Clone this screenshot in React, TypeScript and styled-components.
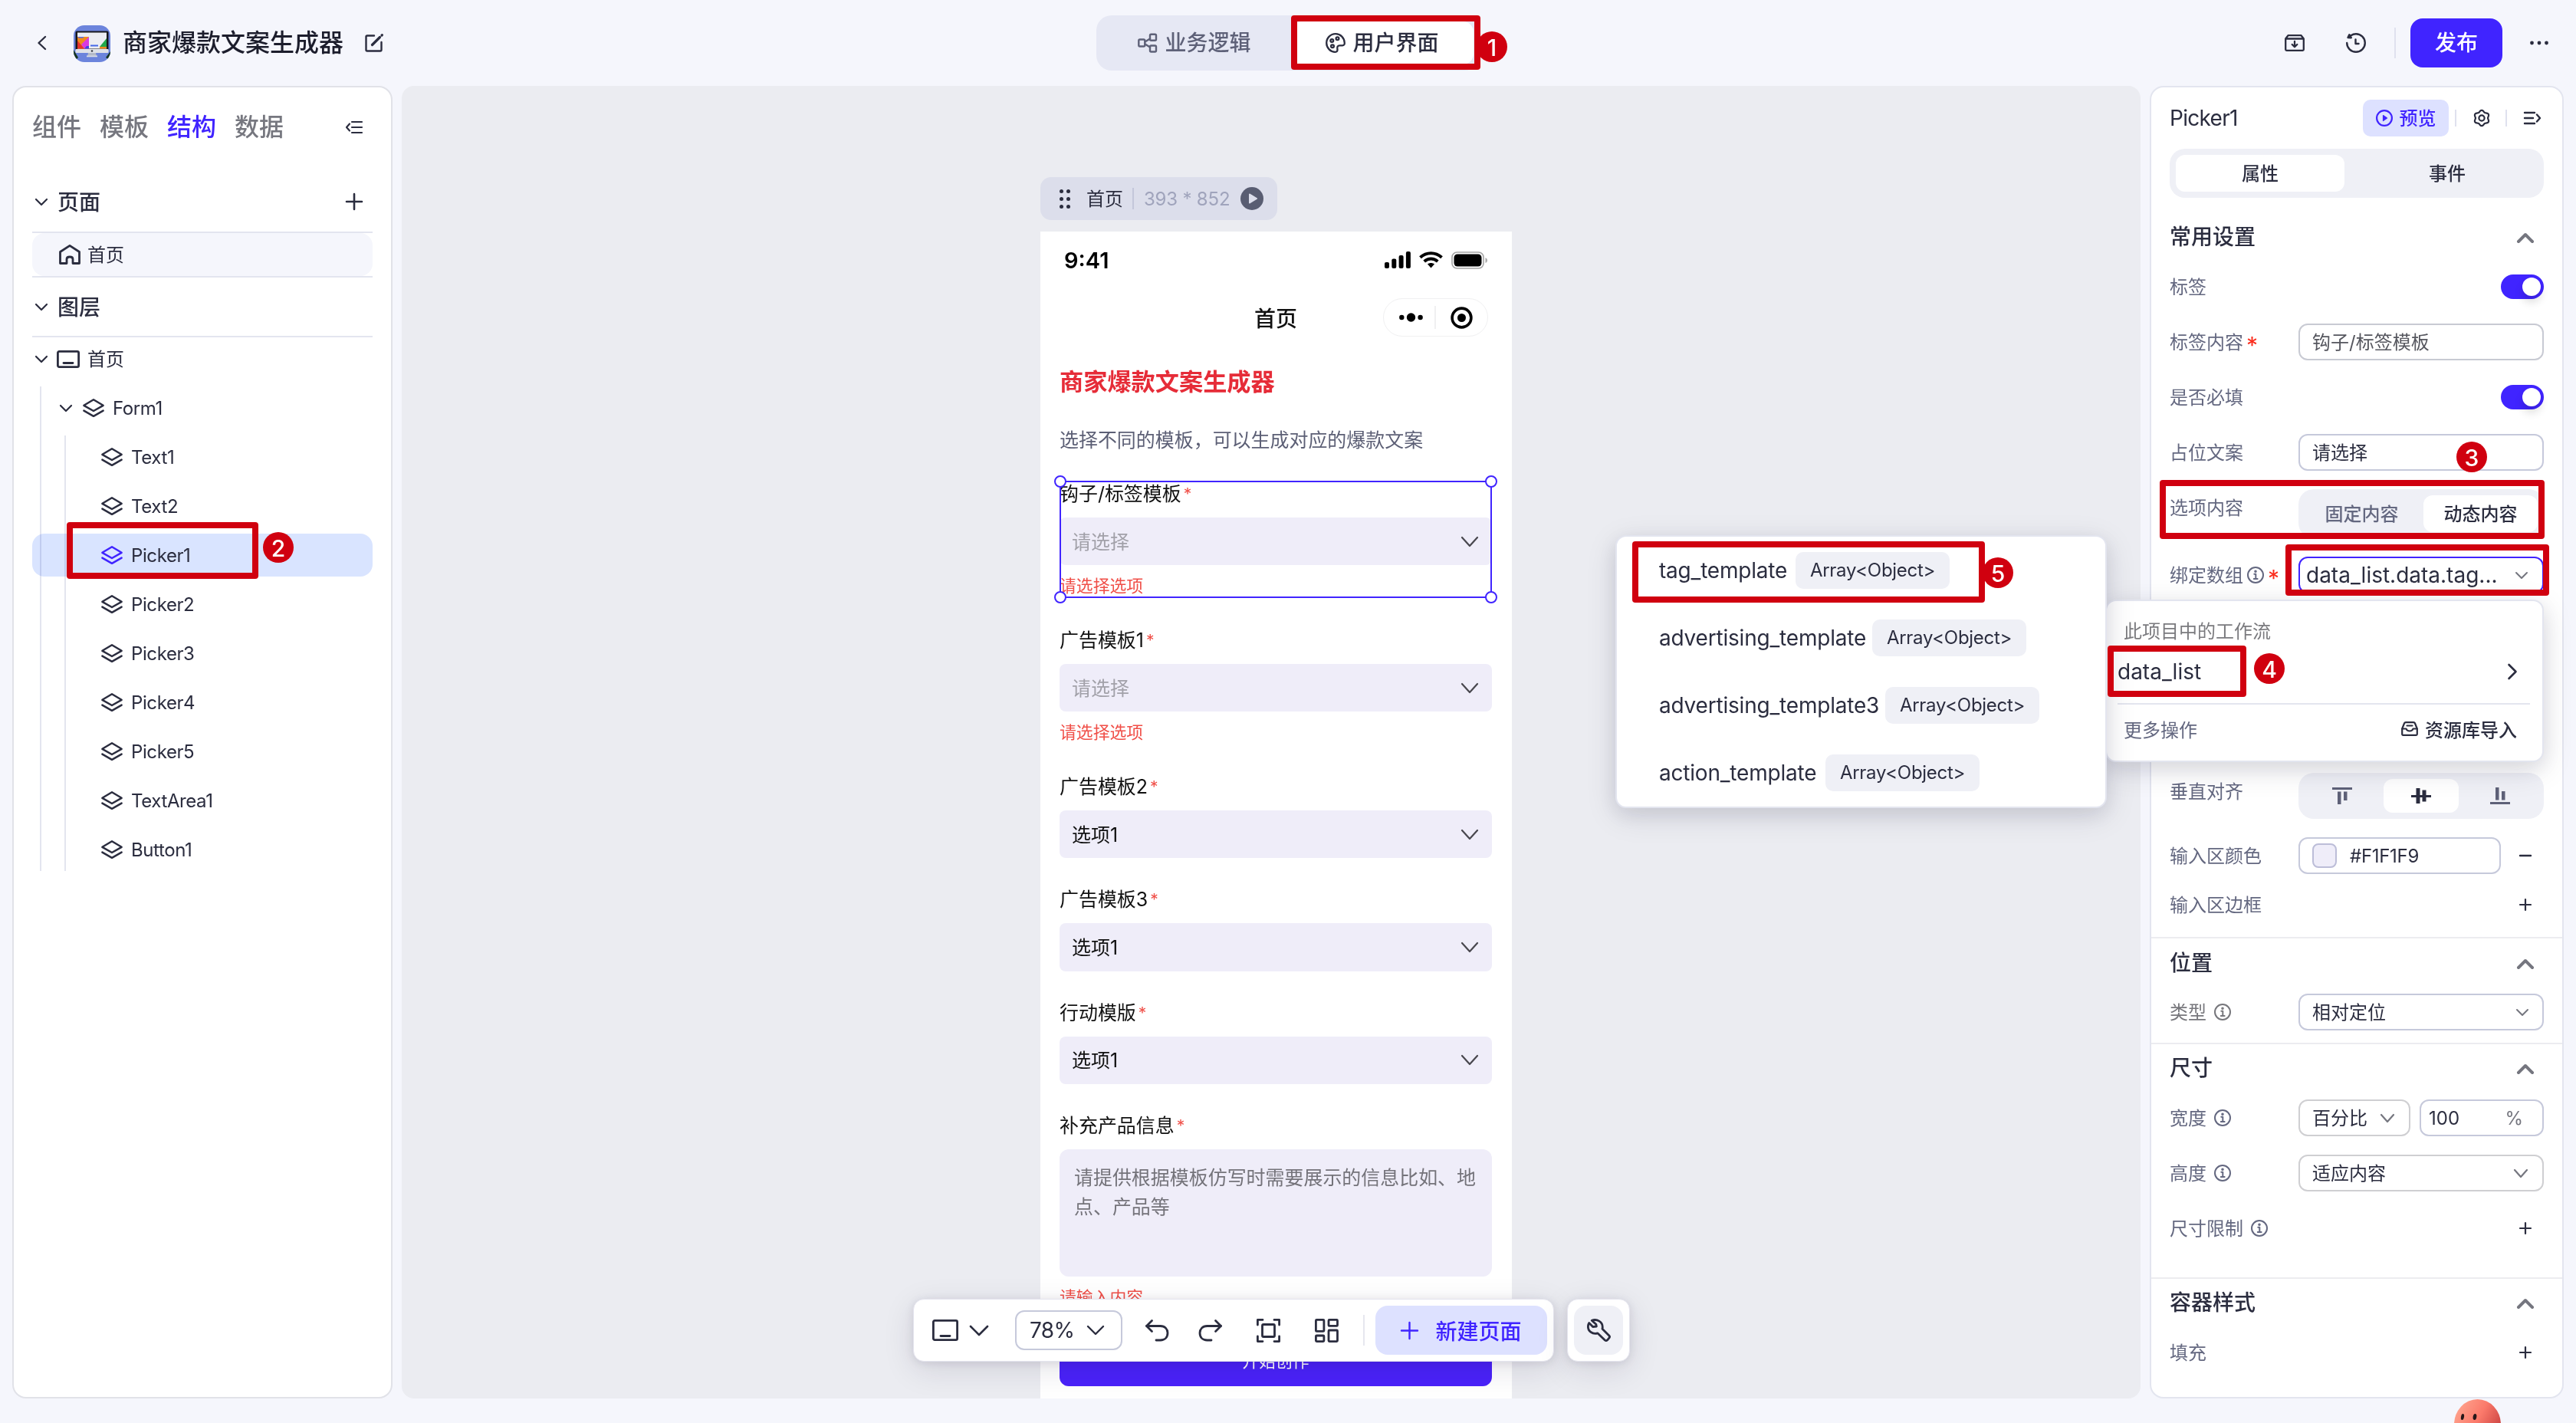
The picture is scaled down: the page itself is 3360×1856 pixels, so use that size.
import React, { ReactNode } from 'react';
import styled, { createGlobalStyle, css } from 'styled-components';

const COLORS = {
  primary: '#4024ff',
  primarySoft: '#dde1ff',
  ink: '#2b2d3f',
  label: '#646880',
  gray: '#75767f',
  page: '#f5f6fc',
  canvas: '#ebecf1',
  fill: '#eff0f6',
  field: '#efedf9',
  border: '#e3e5ef',
  inputBorder: '#c6c9db',
  error: '#f04f48',
  mark: '#d0000f',
};

const GlobalStyle = createGlobalStyle`
  * {
    box-sizing: border-box;
  }

  body {
    margin: 0;
    background: ${COLORS.page};
    color: ${COLORS.ink};
    font-family: Inter, 'Noto Sans CJK SC', sans-serif;
    font-size: 24px;
  }

  svg {
    display: block;
    flex-shrink: 0;
    overflow: visible;
  }
`;

// Chinese glyphs sit low on the Inter baseline, this lifts them back to the middle
const Cjk = styled.span`
  padding-bottom: 3px;
`;

/* ---------- icons ---------- */

interface IconProps {
  w: number;
  h: number;
  stroke?: number;
  color?: string;
  children?: ReactNode;
}

function Icon({ w, h, stroke = 2.6, color = COLORS.ink, children }: IconProps) {
  return (
    <svg
      width={w}
      height={h}
      viewBox={`0 0 ${w} ${h}`}
      fill="none"
      stroke={color}
      strokeWidth={stroke}
      strokeLinecap="round"
      strokeLinejoin="round"
    >
      {children}
    </svg>
  );
}

const ChevronDown = ({ w = 16, h = 9, stroke = 2.2, color = COLORS.ink }: Partial<IconProps>) => (
  <Icon w={w} h={h} stroke={stroke} color={color}>
    <path d={`M1 1 L${w / 2} ${h - 1} L${w - 1} 1`} />
  </Icon>
);

const ChevronUp = () => (
  <Icon w={22} h={13} stroke={4} color={COLORS.gray}>
    <path d="M2 11 L11 2 L20 11" />
  </Icon>
);

const PlusIcon = ({ w = 22, stroke = 2.6, color = COLORS.ink }: Partial<IconProps>) => (
  <Icon w={w} h={w} stroke={stroke} color={color}>
    <path d={`M${w / 2} 1 V${w - 1} M1 ${w / 2} H${w - 1}`} />
  </Icon>
);

const LayersIcon = ({ color }: { color?: string }) => (
  <Icon w={28} h={24} stroke={2.5} color={color}>
    <path d="M14 1.3 L26.6 8.8 L14 16 L1.4 8.8 Z" />
    <path d="M1.4 15.6 L14 22.8 L26.6 15.6" />
  </Icon>
);

const InfoIcon = ({ color = COLORS.label }: { color?: string }) => (
  <Icon w={22} h={22} stroke={2} color={color}>
    <circle cx="11" cy="11" r="10" />
    <path d="M9.3 9.8 H11.3 V16 M8.8 16 H13.6" />
    <circle cx="11" cy="6.3" r="0.8" fill={color} />
  </Icon>
);

const ScreenIcon = ({ w = 30, h = 23 }: { w?: number; h?: number }) => (
  <Icon w={w} h={h} stroke={2.8}>
    <rect x="1.4" y="1.4" width={w - 2.8} height={h - 2.8} rx="1.8" />
    <path d={`M${w / 2 - 6} ${h - 6.5} H${w / 2 + 6}`} />
  </Icon>
);

// six soft teeth around the hub
const gearPoints = Array.from({ length: 72 }, (_, i) => {
  const angle = (i * Math.PI) / 36;
  const radius = 9.1 + 1.05 * Math.cos(6 * angle);
  return `${(11 + radius * Math.sin(angle)).toFixed(2)},${(11 - radius * Math.cos(angle)).toFixed(2)}`;
}).join(' ');

/* ---------- header ---------- */

const Page = styled.div`
  position: relative;
  display: flex;
  flex-direction: column;
  width: 3360px;
  height: 1856px;
  overflow: hidden;
  background: ${COLORS.page};
`;

const Header = styled.header`
  display: grid;
  grid-template-columns: 1fr 500px 1fr;
  height: 112px;
`;

const HeaderLeft = styled.div`
  display: flex;
  align-items: center;
  padding-left: 49px;
`;

const AppLogo = styled.div`
  margin: 2px 16px 0 36px;
`;

const AppTitle = styled.h1`
  margin: 0 28px 0 0;
  font-size: 32px;
  font-weight: 500;
  line-height: 48px;
  color: #1c1d2c;
`;

const ModeSwitch = styled.div`
  display: flex;
  justify-content: space-between;
  align-self: center;
  height: 72px;
  padding: 8px;
  border-radius: 20px;
  background: #e6e8f4;
`;

const Mode = styled.div<{ active?: boolean }>`
  display: flex;
  justify-content: center;
  align-items: center;
  gap: 9px;
  width: ${({ active }) => (active ? 238 : 240)}px;
  border-radius: 14px;
  font-size: 28px;
  font-weight: 500;
  line-height: 40px;
  color: ${({ active }) => (active ? COLORS.ink : '#5e6178')};
  background: ${({ active }) => (active ? '#ffffff' : 'none')};
`;

const HeaderRight = styled.div`
  display: flex;
  justify-content: flex-end;
  align-items: center;
  padding-right: 36px;
`;

const HeaderIcon = styled.div<{ space: number }>`
  margin-right: ${({ space }) => space}px;
`;

const VLine = styled.div<{ size: number; left?: number; right?: number; tone?: string }>`
  flex-shrink: 0;
  width: 2px;
  height: ${({ size }) => size}px;
  margin-left: ${({ left }) => left || 0}px;
  margin-right: ${({ right }) => right || 0}px;
  background: ${({ tone }) => tone || '#dfe1ee'};
`;

const PublishButton = styled.div`
  width: 120px;
  height: 64px;
  margin-right: 36px;
  border-radius: 16px;
  background: ${COLORS.primary};
  color: #ffffff;
  font-size: 28px;
  font-weight: 500;
  line-height: 64px;
  text-align: center;
`;

/* ---------- left panel ---------- */

const Body = styled.main`
  display: grid;
  grid-template-columns: 496px 2268px 540px;
  gap: 12px;
  height: 1712px;
  padding-left: 16px;
`;

const Panel = styled.section`
  min-width: 0;
  border: 2px solid ${COLORS.border};
  border-radius: 18px;
  background: #ffffff;
  overflow: hidden;
`;

const LeftPanel = styled(Panel)`
  padding: 0 24px;
  border-color: #e1e2e8;
`;

const Tabs = styled.div`
  display: flex;
  align-items: center;
  gap: 24px;
  height: 104px;
  padding-right: 13px;
`;

const Tab = styled.div<{ active?: boolean }>`
  font-size: 32px;
  font-weight: 500;
  line-height: 48px;
  color: ${({ active }) => (active ? COLORS.primary : '#76777f')};
`;

const Push = styled.div`
  margin-left: auto;
`;

const TreeHead = styled.div<{ tall: number; top?: number }>`
  display: flex;
  align-items: center;
  gap: 13px;
  height: ${({ tall }) => tall}px;
  padding: ${({ top }) => top || 0}px 13px 0 4px;
  border-bottom: 2px solid ${COLORS.border};
  font-size: 28px;
  font-weight: 500;
`;

const PageRow = styled.div`
  display: flex;
  align-items: center;
  gap: 9px;
  height: 56px;
  padding-left: 35px;
  border-radius: 16px;
  background: ${COLORS.page};
`;

const PageRows = styled.div`
  border-bottom: 2px solid ${COLORS.border};
`;

const RootRow = styled.div`
  display: flex;
  align-items: center;
  height: 64px;
  padding: 0 0 8px 4px;
  gap: 12px;

  & > svg + svg {
    margin-right: -2px;
  }
`;

const Tree = styled.div`
  display: flex;
  flex-direction: column;
  height: 632px;
  background: linear-gradient(${COLORS.border}, ${COLORS.border}) 10px 0 / 2px 632px no-repeat,
    linear-gradient(${COLORS.border}, ${COLORS.border}) 42px 64px / 2px 568px no-repeat;
`;

const TreeRow = styled.div<{ level: number; active?: boolean }>`
  display: flex;
  flex-shrink: 0;
  align-items: center;
  gap: 11px;
  height: 56px;
  margin-bottom: 8px;
  padding-left: ${({ level }) => (level === 1 ? 36 : 90)}px;
  border-radius: 16px;
  letter-spacing: -0.4px;
  ${({ active }) =>
    active &&
    css`
      background: #d9e4ff;
      mix-blend-mode: multiply;
    `}

  & > svg:nth-last-child(2) {
    margin-left: ${({ level }) => (level === 1 ? 3 : 0)}px;
  }
`;

/* ---------- canvas ---------- */

const Canvas = styled.section`
  display: flex;
  flex-direction: column;
  align-items: flex-start;
  padding: 119px 0 0 833px;
  border-radius: 16px;
  background: ${COLORS.canvas};
  overflow: hidden;
`;

const FrameChip = styled.div`
  display: flex;
  align-items: center;
  width: 309px;
  height: 56px;
  margin-bottom: 15px;
  padding-left: 25px;
  border-radius: 14px;
  background: #dcdeeb;
`;

const FrameName = styled(Cjk)`
  margin-left: 21px;
`;

const FrameSize = styled.span`
  width: 114px;
  margin-right: 12px;
  color: #a0a4bc;
  white-space: nowrap;
  letter-spacing: -0.2px;
`;

const Phone = styled.div`
  display: flex;
  flex-direction: column;
  width: 615px;
  height: 1522px;
  padding: 0 26px 0 25px;
  background: #ffffff;
`;

const StatusBar = styled.div`
  display: flex;
  align-items: center;
  height: 74px;
  padding: 0 6px;
  font-size: 29px;
  font-weight: 600;
  color: #000000;
`;

const StatusIcons = styled.div`
  display: flex;
  align-items: center;
  gap: 11px;
  margin-left: auto;
`;

const NavBar = styled.div`
  display: grid;
  grid-template-columns: 1fr auto 1fr;
  align-items: center;
  height: 76px;
  font-size: 28px;
  font-weight: 500;
  color: #111111;
`;

const Capsule = styled.div`
  display: flex;
  align-items: center;
  justify-self: end;
  width: 137px;
  height: 50px;
  margin-right: 5px;
  padding-left: 20px;
  border: 1px solid #f0f0f1;
  border-radius: 25px;
`;

const PromoTitle = styled.div`
  margin-top: 22px;
  font-size: 31.2px;
  font-weight: 700;
  line-height: 48px;
  color: #e62c38;
`;

const PromoText = styled.div`
  margin: 32px 0 34px;
  font-size: 24.96px;
  line-height: 40px;
  color: #5c5f75;
`;

const Field = styled.div`
  position: relative;
  display: flex;
  flex-direction: column;
  margin-bottom: 38px;
  color: #111111;
`;

const FieldLabel = styled.div`
  display: flex;
  height: 32px;
  margin-bottom: 15px;
  font-size: 24.96px;
  line-height: 32px;

  & > i {
    margin-left: 3px;
    font-size: 21px;
    font-style: normal;
    line-height: 34px;
    color: ${COLORS.error};
  }
`;

const FieldSelect = styled.div<{ empty?: boolean }>`
  display: flex;
  justify-content: space-between;
  align-items: center;
  width: 564px;
  height: 62.4px;
  padding: 0 18px 0 16px;
  border-radius: 8px;
  background: ${COLORS.field};
  font-size: 24.96px;
  color: ${({ empty }) => (empty ? '#a2a1a9' : '#111111')};
`;

const FieldError = styled.div`
  height: 43.6px;
  padding-top: 13px;
  font-size: 21.84px;
  line-height: 29px;
  color: ${COLORS.error};
`;

const FieldTextArea = styled.div`
  width: 564px;
  height: 166px;
  padding: 19px 0 0 19px;
  border-radius: 12px;
  background: ${COLORS.field};
  font-size: 24.96px;
  line-height: 37.44px;
  color: #74737a;
`;

const StartButton = styled.div`
  width: 564px;
  height: 62px;
  margin-top: -1px;
  border-radius: 12px;
  background: #4a22fa;
  color: #ffffff;
  font-size: 21.84px;
  line-height: 59px;
  text-align: center;
`;

const Selection = styled.div`
  position: absolute;
  inset: -1px 0 0 0;
  width: 564px;
  height: 153px;
  border: 2px solid ${COLORS.primary};
`;

const Handle = styled.i<{ x: 'left' | 'right'; y: 'top' | 'bottom' }>`
  position: absolute;
  ${({ x }) => x}: -9px;
  ${({ y }) => y}: -9px;
  width: 16px;
  height: 16px;
  border: 2px solid ${COLORS.primary};
  border-radius: 50%;
  background: #ffffff;
`;

/* ---------- floating toolbar ---------- */

const FloatBar = styled.div`
  position: absolute;
  left: 1191px;
  top: 1694px;
  display: flex;
  gap: 17px;
`;

const FloatGroup = styled.div`
  display: flex;
  align-items: center;
  height: 82px;
  padding: 0 8px;
  border: 1px solid #e4e4ee;
  border-radius: 14px;
  background: #ffffff;
  box-shadow: 0 10px 40px rgba(30, 24, 60, 0.12), 0 2px 12px rgba(30, 24, 60, 0.1);
`;

const ScreenPicker = styled.div`
  display: flex;
  align-items: center;
  gap: 15px;
  margin: 0 35px 0 16px;
`;

const ZoomSelect = styled.div`
  display: flex;
  align-items: center;
  justify-content: space-between;
  width: 140px;
  height: 52px;
  margin-right: 30px;
  padding: 0 22px 0 17px;
  border: 2px solid ${COLORS.inputBorder};
  border-radius: 12px;
  font-size: 28px;
  letter-spacing: -0.6px;
`;

const BarTools = styled.div`
  display: flex;
  align-items: center;
  gap: 45px;
  width: 254px;

  & > svg:first-child {
    margin-right: -7px;
  }
`;

const NewPageButton = styled.div`
  display: flex;
  justify-content: center;
  align-items: center;
  gap: 22px;
  width: 224px;
  height: 64px;
  border-radius: 16px;
  background: ${COLORS.primarySoft};
  color: ${COLORS.primary};
  font-size: 28px;
  font-weight: 500;
`;

const WrenchButton = styled.div`
  display: flex;
  justify-content: center;
  align-items: center;
  width: 64px;
  height: 64px;
  border-radius: 16px;
  background: ${COLORS.fill};
`;

/* ---------- right panel ---------- */

const PanelTop = styled.div`
  display: flex;
  align-items: center;
  height: 48px;
  margin: 16px 28px 16px 24px;
  font-size: 28px;
  letter-spacing: -0.7px;
`;

const PreviewButton = styled.div`
  display: flex;
  justify-content: center;
  align-items: center;
  gap: 9px;
  width: 112px;
  height: 48px;
  margin-left: auto;
  border-radius: 10px;
  background: ${COLORS.primarySoft};
  color: ${COLORS.primary};
  font-size: 24px;
  font-weight: 500;
  letter-spacing: 0;
`;

const Segment = styled.div<{ tall: number; wide: number }>`
  display: flex;
  justify-content: space-between;
  flex-shrink: 0;
  width: ${({ wide }) => wide}px;
  height: ${({ tall }) => tall}px;
  padding: 8px;
  border-radius: 20px;
  background: ${COLORS.fill};
`;

const SegmentItem = styled.div<{ wide: number; active?: boolean; muted?: boolean }>`
  display: flex;
  justify-content: center;
  align-items: center;
  width: ${({ wide }) => wide}px;
  border-radius: 12px;
  font-weight: 500;
  color: ${({ muted }) => (muted ? COLORS.label : COLORS.ink)};
  background: ${({ active }) => (active ? '#ffffff' : 'none')};
`;

const Indent = styled.div`
  margin-left: 24px;
`;

const Row = styled.div<{ top: number; tall?: number }>`
  display: flex;
  align-items: flex-start;
  height: ${({ tall }) => tall || 48}px;
  margin: ${({ top }) => top}px 24px 0 24px;
`;

const RowLabel = styled.div<{ gap?: number; gray?: boolean }>`
  display: flex;
  align-items: center;
  gap: ${({ gap }) => gap || 10}px;
  width: 168px;
  height: 48px;
  color: ${({ gray }) => (gray ? '#77777c' : COLORS.label)};
  white-space: nowrap;

  & > i {
    margin-top: 8px;
    font-family: Inter, sans-serif;
    font-size: 30px;
    font-style: normal;
    line-height: 30px;
    color: #fb2c1c;
  }
`;

const RowEnd = styled.div<{ inset?: number }>`
  display: flex;
  align-items: center;
  height: 48px;
  margin-left: auto;
  margin-right: ${({ inset }) => inset || 0}px;
`;

const GroupTitle = styled.div`
  font-size: 28px;
  font-weight: 500;
  line-height: 47px;
`;

const Divider = styled.div<{ top: number }>`
  height: 2px;
  margin-top: ${({ top }) => top}px;
  background: #ececf0;
`;

const Toggle = styled.div`
  display: flex;
  justify-content: flex-end;
  width: 56px;
  height: 32px;
  padding: 4px;
  border-radius: 16px;
  background: ${COLORS.primary};

  &::after {
    content: '';
    width: 24px;
    height: 24px;
    border-radius: 50%;
    background: #ffffff;
    box-shadow: 0 8px 12px rgba(0, 0, 0, 0.14);
  }
`;

const Input = styled.div<{ wide?: number; tone?: string; text?: string; big?: boolean; right?: number }>`
  display: flex;
  align-items: center;
  justify-content: space-between;
  flex-shrink: 0;
  width: ${({ wide }) => wide || 320}px;
  height: 48px;
  padding: 0 ${({ right }) => right || 18}px 0 ${({ big }) => (big ? 8 : 16)}px;
  border: 2px solid ${({ tone }) => tone || COLORS.inputBorder};
  border-radius: 12px;
  color: ${({ text }) => text || COLORS.ink};
  font-size: ${({ big }) => (big ? 28 : 24)}px;
`;

const Swatch = styled.div`
  width: 32px;
  height: 32px;
  margin-right: 17px;
  border: 2px solid #bcbdd8;
  border-radius: 8px;
  background: ${COLORS.field};
`;

const ColorValue = styled.span`
  flex: 1;
  letter-spacing: -0.3px;
`;

const PercentValue = styled.span`
  margin-left: -6px;
`;

const PercentUnit = styled.span`
  color: ${COLORS.gray};
`;

/* ---------- dropdown menus ---------- */

const menuBox = css`
  position: absolute;
  border: 2px solid ${COLORS.border};
  border-radius: 14px;
  background: #ffffff;
  box-shadow: 0 10px 40px rgba(20, 20, 60, 0.12), 0 8px 24px rgba(20, 20, 40, 0.08);
`;

const FlowMenu = styled.div`
  ${menuBox}
  left: 2746px;
  top: 782px;
  width: 572px;
  height: 212px;
  padding: 15px 16px 0 14px;
`;

const FlowCaption = styled.div`
  padding-left: 8px;
  line-height: 50px;
  color: #7a7a7e;
`;

const FlowItem = styled.div`
  display: flex;
  justify-content: space-between;
  align-items: center;
  height: 70px;
  padding: 0 17px 14px 0;
  border-bottom: 2px solid ${COLORS.border};
  font-size: 28px;
`;

const FlowFooter = styled.div`
  display: flex;
  justify-content: space-between;
  align-items: center;
  height: 62px;
  padding: 0 17px 0 8px;
  color: ${COLORS.label};
`;

const FlowImport = styled.div`
  display: flex;
  align-items: center;
  gap: 9px;
  font-weight: 500;
  color: ${COLORS.ink};
`;

const FieldMenu = styled.div`
  ${menuBox}
  left: 2107px;
  top: 698px;
  width: 641px;
  height: 356px;
`;

const FieldOption = styled.div`
  display: flex;
  align-items: center;
  gap: 9px;
  height: 88px;
  padding-left: 55px;
  font-size: 28px;
`;

const OptionName = styled.span<{ wide: number }>`
  width: ${({ wide }) => wide}px;
  letter-spacing: -0.2px;
  white-space: nowrap;
`;

const TypeTag = styled.span`
  width: 201px;
  height: 48px;
  border-radius: 10px;
  background: ${COLORS.fill};
  font-size: 24px;
  letter-spacing: -0.3px;
  line-height: 48px;
  text-align: center;
`;

/* ---------- annotations ---------- */

const MarkBox = styled.div<{ x: number; y: number; w: number; h: number }>`
  position: absolute;
  left: ${({ x }) => x}px;
  top: ${({ y }) => y}px;
  width: ${({ w }) => w}px;
  height: ${({ h }) => h}px;
  border: 8px solid ${COLORS.mark};
  border-radius: 4px;
`;

const MarkDot = styled.div<{ x: number; y: number }>`
  position: absolute;
  left: ${({ x }) => x - 20}px;
  top: ${({ y }) => y - 20}px;
  width: 40px;
  height: 40px;
  border-radius: 50%;
  background: ${COLORS.mark};
  color: #ffffff;
  font-size: 30px;
  font-weight: 500;
  line-height: 42px;
  text-align: center;
`;

const Mascot = styled.div`
  position: absolute;
  left: 3201px;
  top: 1825px;
`;

const treeItems = [
  'Text1',
  'Text2',
  'Picker1',
  'Picker2',
  'Picker3',
  'Picker4',
  'Picker5',
  'TextArea1',
  'Button1',
];

const formFields = [
  { label: '钩子/标签模板', error: '请选择选项', selected: true },
  { label: '广告模板1', error: '请选择选项' },
  { label: '广告模板2', value: '选项1' },
  { label: '广告模板3', value: '选项1' },
  { label: '行动模版', value: '选项1' },
];

const arrayOptions = [
  { name: 'tag_template', width: 169 },
  { name: 'advertising_template', width: 269 },
  { name: 'advertising_template3', width: 286 },
  { name: 'action_template', width: 208 },
];

const marks = [
  { x: 1684, y: 20, w: 247, h: 71 },
  { x: 87, y: 681, w: 250, h: 74 },
  { x: 2817, y: 626, w: 502, h: 77 },
  { x: 2981, y: 710, w: 344, h: 67 },
  { x: 2749, y: 842, w: 181, h: 67 },
  { x: 2129, y: 706, w: 460, h: 80 },
];

const dots = [
  { x: 1946, y: 61 },
  { x: 363, y: 714 },
  { x: 3224, y: 596 },
  { x: 2960, y: 872 },
  { x: 2606, y: 747 },
];

function TopBar() {
  return (
    <Header>
      <HeaderLeft>
        <Icon w={11} h={18} stroke={2.4}>
          <path d="M10 1 L1.5 9 L10 17" />
        </Icon>
        <AppLogo>
          <svg width="48" height="48" viewBox="0 0 48 48">
            <defs>
              <clipPath id="logo-clip">
                <rect width="48" height="48" rx="14" />
              </clipPath>
            </defs>
            <g clipPath="url(#logo-clip)">
              <rect width="48" height="48" fill="#6c84dc" />
              <path d="M0 32 L6 42 L0 48 Z M48 34 L42 42 L48 46 Z" fill="#16351f" />
              <rect x="2.5" y="7.5" width="43" height="25" rx="1.5" fill="#17181c" />
              <rect x="5" y="9.5" width="38" height="21" fill="#eceef2" />
              <rect x="5" y="15" width="15" height="15.5" fill="#f08a1c" />
              <path d="M5 30.5 V20 L14 30.5 Z" fill="#e5322b" />
              <path d="M10 25 L20 15 V30.5 H14 Z" fill="#d93be0" />
              <path d="M14 30.5 L17 27 H20 V30.5 Z" fill="#3a44e8" />
              <path d="M34 28 L43 17 V28 Z" fill="#23a84a" />
              <path d="M34 28 H43 V30.5 H34 Z" fill="#f08a1c" />
              <rect x="22" y="25.5" width="10" height="2" fill="#4469e8" />
              <rect x="6" y="15" width="7" height="1.5" fill="#5a6be0" />
              <rect x="2.5" y="31" width="43" height="5" rx="1" fill="#dfe2e8" />
              <circle cx="24" cy="33.5" r="1.3" fill="#3a3c44" />
              <path d="M19 36 H29 L30 41 H18 Z" fill="#b4bac8" />
              <rect x="17" y="39.5" width="14" height="1.8" fill="#d8dce6" />
            </g>
          </svg>
        </AppLogo>
        <AppTitle>商家爆款文案生成器</AppTitle>
        <Icon w={24} h={24} stroke={2.4}>
          <path d="M12 2.5 H3 Q1.5 2.5 1.5 4 V21 Q1.5 22.5 3 22.5 H20 Q21.5 22.5 21.5 21 V11" />
          <path d="M9.5 14.5 L19.5 4.5" stroke-width={3.2} />
          <path d="M22 2 L22.4 1.6" strokeWidth={3.2} />
        </Icon>
      </HeaderLeft>
      <ModeSwitch>
        <Mode>
          <Icon w={26} h={26} stroke={2.4} color="#5e6178">
            <rect x="1.3" y="8.5" width="8" height="9" rx="1.5" />
            <rect x="16" y="1.8" width="8" height="8" rx="1.5" />
            <rect x="16" y="16.5" width="8" height="8" rx="1.5" />
            <path d="M9.5 11.5 L16 7.5 M9.5 14.5 L16 18.5" />
          </Icon>
          业务逻辑
        </Mode>
        <Mode active>
          <Icon w={26} h={26} stroke={2.3}>
            <path d="M13 1.2 C6.5 1.2 1.2 6.5 1.2 13 C1.2 19.5 6.5 24.8 12.5 24.8 C15 24.8 15.8 23.3 15.4 21.3 C15 18 15.6 16.3 18.4 16.3 H22 C24 16.3 24.9 15 24.8 13 C24.6 6.3 19.5 1.2 13 1.2 Z" />
            <circle cx="8.3" cy="10" r="1.9" />
            <circle cx="15.5" cy="7.3" r="1.9" />
            <circle cx="9" cy="17.3" r="1.9" />
          </Icon>
          用户界面
        </Mode>
      </ModeSwitch>
      <HeaderRight>
        <HeaderIcon space={54}>
          <Icon w={26} h={22} stroke={2.3}>
            <path d="M1.2 5.5 L4.5 1.2 H21.5 L24.8 5.5 V19.5 Q24.8 20.8 23.5 20.8 H2.5 Q1.2 20.8 1.2 19.5 Z M1.2 5.5 H24.8" />
            <path d="M13 9 V16 M9.7 13 L13 16.3 L16.3 13" />
          </Icon>
        </HeaderIcon>
        <HeaderIcon space={37}>
          <Icon w={26} h={26} stroke={2.4}>
            <path d="M6.5 3.3 C8.3 2 10.5 1.2 13 1.2 C19.5 1.2 24.8 6.5 24.8 13 C24.8 19.5 19.5 24.8 13 24.8 C6.5 24.8 1.2 19.5 1.2 13" />
            <path d="M4.3 2.2 L2.5 6 L6.8 6.2 Z" fill={COLORS.ink} />
            <path d="M12.5 8.5 V14 H16.5" />
          </Icon>
        </HeaderIcon>
        <VLine size={40} right={19} />
        <PublishButton>发布</PublishButton>
        <Icon w={24} h={6} stroke={0}>
          <circle cx="2.5" cy="3" r="2.4" fill={COLORS.ink} />
          <circle cx="12" cy="3" r="2.4" fill={COLORS.ink} />
          <circle cx="21.5" cy="3" r="2.4" fill={COLORS.ink} />
        </Icon>
      </HeaderRight>
    </Header>
  );
}

function StructurePanel() {
  return (
    <LeftPanel>
      <Tabs>
        <Tab>组件</Tab>
        <Tab>模板</Tab>
        <Tab active>结构</Tab>
        <Tab>数据</Tab>
        <Push>
          <Icon w={22} h={16} stroke={2.2}>
            <path d="M8 1 H21 M8 8 H21 M8 15 H21 M5 3.5 L1 8 L5 12.5" />
          </Icon>
        </Push>
      </Tabs>
      <TreeHead tall={86} top={6}>
        <ChevronDown />
        <Cjk>页面</Cjk>
        <Push>
          <PlusIcon />
        </Push>
      </TreeHead>
      <PageRows>
        <PageRow>
          <Icon w={28} h={26} stroke={2.8}>
            <path d="M1.5 9.5 L14 1.4 L26.5 9.5 V24.5 H18 V19 Q18 16 14 16 Q10 16 10 19 V24.5 H1.5 Z" />
          </Icon>
          <Cjk>首页</Cjk>
        </PageRow>
      </PageRows>
      <TreeHead tall={78}>
        <ChevronDown />
        <Cjk>图层</Cjk>
      </TreeHead>
      <RootRow>
        <ChevronDown />
        <ScreenIcon />
        <Cjk>首页</Cjk>
      </RootRow>
      <Tree>
        <TreeRow level={1}>
          <ChevronDown />
          <LayersIcon />
          <span>Form1</span>
        </TreeRow>
        {treeItems.map((item) => (
          <TreeRow key={item} level={2} active={item === 'Picker1'}>
            <LayersIcon color={item === 'Picker1' ? COLORS.primary : COLORS.ink} />
            <span>{item}</span>
          </TreeRow>
        ))}
      </Tree>
    </LeftPanel>
  );
}

function PhonePreview() {
  return (
    <Phone>
      <StatusBar>
        9:41
        <StatusIcons>
          <svg width="34" height="22" viewBox="0 0 34 22">
            <rect x="0" y="14" width="6" height="8" rx="2" />
            <rect x="9.3" y="9.5" width="6" height="12.5" rx="2" />
            <rect x="18.6" y="5" width="6" height="17" rx="2" />
            <rect x="27.9" y="0" width="6" height="22" rx="2" />
          </svg>
          <svg width="31" height="22" viewBox="0 0 31 22">
            <g fill="none" stroke="#000000" strokeWidth="4">
              <path d="M1.5 7.8 C9.5 0.3 21.5 0.3 29.5 7.8" />
              <path d="M6.7 13 C12 8.3 19 8.3 24.3 13" />
            </g>
            <path d="M11 16.5 C13.5 14.5 17.5 14.5 20 16.5 L15.5 21.5 Z" />
          </svg>
          <svg width="47" height="23" viewBox="0 0 47 23">
            <rect x="1" y="1" width="41" height="21" rx="6.5" fill="none" stroke="#a5a5a5" strokeWidth="1.6" />
            <rect x="3.5" y="3.5" width="36" height="16" rx="4.5" />
            <path d="M44.5 8 Q47 9 47 11.5 Q47 14 44.5 15 Z" fill="#a5a5a5" />
          </svg>
        </StatusIcons>
      </StatusBar>
      <NavBar>
        <div />
        首页
        <Capsule>
          <svg width="31" height="12" viewBox="0 0 31 12">
            <circle cx="3.3" cy="6" r="3.2" />
            <circle cx="15.5" cy="6" r="5.7" />
            <circle cx="27.6" cy="6" r="3.2" />
          </svg>
          <VLine size={30} left={15} right={19} tone="#f0f0f1" />
          <svg width="29" height="29" viewBox="0 0 29 29">
            <circle cx="14.5" cy="14.5" r="12.4" fill="none" stroke="#000000" strokeWidth="3.6" />
            <circle cx="14.5" cy="14.5" r="5.5" />
          </svg>
        </Capsule>
      </NavBar>
      <PromoTitle>商家爆款文案生成器</PromoTitle>
      <PromoText>选择不同的模板，可以生成对应的爆款文案</PromoText>
      {formFields.map(({ label, value, error, selected }) => (
        <Field key={label}>
          <FieldLabel>
            {label}
            <i>*</i>
          </FieldLabel>
          <FieldSelect empty={!value}>
            <Cjk>{value || '请选择'}</Cjk>
            <ChevronDown w={22} h={13} stroke={2.2} color="#48474e" />
          </FieldSelect>
          {error && <FieldError>{error}</FieldError>}
          {selected && (
            <Selection>
              <Handle x="left" y="top" />
              <Handle x="right" y="top" />
              <Handle x="left" y="bottom" />
              <Handle x="right" y="bottom" />
            </Selection>
          )}
        </Field>
      ))}
      <Field>
        <FieldLabel>
          补充产品信息
          <i>*</i>
        </FieldLabel>
        <FieldTextArea>请提供根据模板仿写时需要展示的信息比如、地点、产品等</FieldTextArea>
        <FieldError>请输入内容</FieldError>
      </Field>
      <StartButton>开始创作</StartButton>
    </Phone>
  );
}

function DesignCanvas() {
  return (
    <Canvas>
      <FrameChip>
        <svg width="14" height="25" viewBox="0 0 14 25" fill={COLORS.ink}>
          {[2.5, 12.5, 22.5].map((y) => (
            <g key={y}>
              <circle cx="2.5" cy={y} r="2.5" />
              <circle cx="11.5" cy={y} r="2.5" />
            </g>
          ))}
        </svg>
        <FrameName>首页</FrameName>
        <VLine size={28} left={12} right={13} tone="#c4c7da" />
        <FrameSize>393 * 852</FrameSize>
        <svg width="30" height="30" viewBox="0 0 30 30">
          <circle cx="15" cy="15" r="15" fill="#595d72" />
          <path d="M12 9.5 L21 15 L12 20.5 Z" fill="#dcdeeb" stroke="#dcdeeb" strokeWidth="2" strokeLinejoin="round" />
        </svg>
      </FrameChip>
      <PhonePreview />
    </Canvas>
  );
}

function BottomBar() {
  return (
    <FloatBar>
      <FloatGroup>
        <ScreenPicker>
          <ScreenIcon w={34} h={28} />
          <ChevronDown w={24} h={13} stroke={2.6} />
        </ScreenPicker>
        <ZoomSelect>
          78%
          <ChevronDown w={22} h={12} stroke={2.4} />
        </ZoomSelect>
        <BarTools>
          <Icon w={31} h={29} stroke={2.8}>
            <path d="M8.5 1.5 L1.5 8.5 L8.5 15.5" />
            <path d="M1.5 8.5 H19.5 C25.5 8.5 29 12.5 29 17.5 C29 23 25.5 27 19.5 27 H14" />
          </Icon>
          <Icon w={31} h={29} stroke={2.8}>
            <path d="M22.5 1.5 L29.5 8.5 L22.5 15.5" />
            <path d="M29.5 8.5 H11.5 C5.5 8.5 2 12.5 2 17.5 C2 23 5.5 27 11.5 27 H17" />
          </Icon>
          <Icon w={31} h={31} stroke={2.8}>
            <path d="M1.4 8 V1.4 H8 M23 1.4 H29.6 V8 M29.6 23 V29.6 H23 M8 29.6 H1.4 V23" />
            <rect x="7.5" y="7.5" width="16" height="16" rx="1.5" />
          </Icon>
          <Icon w={31} h={31} stroke={2.8}>
            <rect x="1.4" y="1.4" width="10.5" height="15" rx="1" />
            <rect x="18" y="1.4" width="11.5" height="8" rx="1" />
            <rect x="1.4" y="22" width="10.5" height="7.6" rx="1" />
            <rect x="18" y="15" width="11.5" height="14.6" rx="1" />
          </Icon>
        </BarTools>
        <VLine size={40} left={30} right={14} tone="#e6e7ef" />
        <NewPageButton>
          <PlusIcon w={23} stroke={2.4} color={COLORS.primary} />
          新建页面
        </NewPageButton>
      </FloatGroup>
      <FloatGroup>
        <WrenchButton>
          <Icon w={31} h={31} stroke={2.8}>
            <path d="M6.2 2.3 C13 -0.3 20.6 4 20.3 11.2 L20 13.2 L28.8 22 Q30.3 23.6 28.8 25.2 L26.6 27.8 Q25 29.4 23.4 28 L14 18.9 C7 20.8 0.9 16 1.4 9.6 C1.5 8 2 6.6 2.7 5.6 L7.6 10.6 L12.4 10 L11.8 7.2 Z" />
          </Icon>
        </WrenchButton>
      </FloatGroup>
    </FloatBar>
  );
}

function GroupHeading({ title, top }: { title: string; top: number }) {
  return (
    <Row top={top}>
      <GroupTitle>{title}</GroupTitle>
      <RowEnd inset={13}>
        <ChevronUp />
      </RowEnd>
    </Row>
  );
}

function PropertiesPanel() {
  return (
    <Panel>
      <PanelTop>
        Picker1
        <PreviewButton>
          <Icon w={22} h={22} stroke={2.2} color={COLORS.primary}>
            <circle cx="11" cy="11" r="9.9" />
            <path d="M9.5 7.5 L14.5 11 L9.5 14.5 Z" strokeWidth={1.2} fill={COLORS.primary} />
          </Icon>
          <Cjk>预览</Cjk>
        </PreviewButton>
        <VLine size={22} left={8} right={22} />
        <Icon w={22} h={22} stroke={2.2}>
          <polygon points={gearPoints} />
          <circle cx="11" cy="11" r="3.6" />
        </Icon>
        <VLine size={22} left={20} right={22} />
        <Icon w={22} h={16} stroke={2.4}>
          <path d="M1 1 H14 M1 8 H12 M1 15 H14 M17 3.5 L21 8 L17 12.5" />
        </Icon>
      </PanelTop>
      <Indent>
        <Segment tall={64} wide={488}>
          <SegmentItem wide={220} active>
            <Cjk>属性</Cjk>
          </SegmentItem>
          <SegmentItem wide={236}>
            <Cjk>事件</Cjk>
          </SegmentItem>
        </Segment>
      </Indent>
      <GroupHeading title="常用设置" top={28} />
      <Row top={16}>
        <RowLabel>
          <Cjk>标签</Cjk>
        </RowLabel>
        <RowEnd>
          <Toggle />
        </RowEnd>
      </Row>
      <Row top={24}>
        <RowLabel gap={4}>
          <Cjk>标签内容</Cjk>
          <i>*</i>
        </RowLabel>
        <Input text="#55565e" tone="#c8cad3">
          <Cjk>钩子/标签模板</Cjk>
        </Input>
      </Row>
      <Row top={24}>
        <RowLabel>
          <Cjk>是否必填</Cjk>
        </RowLabel>
        <RowEnd>
          <Toggle />
        </RowEnd>
      </Row>
      <Row top={24}>
        <RowLabel>
          <Cjk>占位文案</Cjk>
        </RowLabel>
        <Input>
          <Cjk>请选择</Cjk>
        </Input>
      </Row>
      <Row top={24} tall={64}>
        <RowLabel>
          <Cjk>选项内容</Cjk>
        </RowLabel>
        <Segment tall={64} wide={320}>
          <SegmentItem wide={149} muted>
            <Cjk>固定内容</Cjk>
          </SegmentItem>
          <SegmentItem wide={149} active>
            <Cjk>动态内容</Cjk>
          </SegmentItem>
        </Segment>
      </Row>
      <Row top={24}>
        <RowLabel gap={5}>
          <Cjk>绑定数组</Cjk>
          <InfoIcon />
          <i>*</i>
        </RowLabel>
        <Input big tone={COLORS.primary} right={19}>
          data_list.data.tag...
          <ChevronDown w={16} h={9} stroke={2} color={COLORS.gray} />
        </Input>
      </Row>
      <Row top={234} tall={60}>
        <RowLabel>
          <Cjk>垂直对齐</Cjk>
        </RowLabel>
        <Segment tall={60} wide={320}>
          <SegmentItem wide={98}>
            <Icon w={26} h={22} stroke={0}>
              <path d="M0 0 H26 V3 H0 Z M7 5.5 H11.5 V22 H7 Z M15 5.5 H19.5 V17 H15 Z" fill="#5e6178" />
            </Icon>
          </SegmentItem>
          <SegmentItem wide={98} active>
            <Icon w={26} h={20} stroke={0}>
              <path d="M0 9 H26 V12 H0 Z M6.5 0 H11.5 V20 H6.5 Z M14.5 2.5 H19.5 V17.5 H14.5 Z" fill={COLORS.ink} />
            </Icon>
          </SegmentItem>
          <SegmentItem wide={98}>
            <Icon w={26} h={22} stroke={0}>
              <path d="M0 19 H26 V22 H0 Z M7 0 H11.5 V16.5 H7 Z M15 5 H19.5 V16.5 H15 Z" fill="#5e6178" />
            </Icon>
          </SegmentItem>
        </Segment>
      </Row>
      <Row top={24}>
        <RowLabel>
          <Cjk>输入区颜色</Cjk>
        </RowLabel>
        <Input wide={264}>
          <Swatch />
          <ColorValue>#F1F1F9</ColorValue>
        </Input>
        <RowEnd inset={16}>
          <Icon w={16} h={4} stroke={2.4}>
            <path d="M1 2 H15" />
          </Icon>
        </RowEnd>
      </Row>
      <Row top={16}>
        <RowLabel>
          <Cjk>输入区边框</Cjk>
        </RowLabel>
        <RowEnd inset={16}>
          <PlusIcon w={16} stroke={2.2} />
        </RowEnd>
      </Row>
      <Divider top={18} />
      <GroupHeading title="位置" top={9} />
      <Row top={15}>
        <RowLabel gray>
          <Cjk>类型</Cjk>
          <InfoIcon color="#77777c" />
        </RowLabel>
        <Input>
          <Cjk>相对定位</Cjk>
          <ChevronDown w={16} h={9} stroke={2} color={COLORS.gray} />
        </Input>
      </Row>
      <Divider top={16} />
      <GroupHeading title="尺寸" top={8} />
      <Row top={16}>
        <RowLabel>
          <Cjk>宽度</Cjk>
          <InfoIcon />
        </RowLabel>
        <Input wide={146} tone="#cfcfd2" right={19}>
          <Cjk>百分比</Cjk>
          <ChevronDown w={18} h={11} color={COLORS.gray} />
        </Input>
        <RowEnd>
          <Input wide={162} right={25}>
            <PercentValue>100</PercentValue>
            <PercentUnit>%</PercentUnit>
          </Input>
        </RowEnd>
      </Row>
      <Row top={24}>
        <RowLabel>
          <Cjk>高度</Cjk>
          <InfoIcon />
        </RowLabel>
        <Input tone="#cfcfd2" right={19}>
          <Cjk>适应内容</Cjk>
          <ChevronDown w={18} h={11} color={COLORS.gray} />
        </Input>
      </Row>
      <Row top={24}>
        <RowLabel>
          <Cjk>尺寸限制</Cjk>
          <InfoIcon />
        </RowLabel>
        <RowEnd inset={16}>
          <PlusIcon w={16} stroke={2.2} />
        </RowEnd>
      </Row>
      <Divider top={40} />
      <GroupHeading title="容器样式" top={8} />
      <Row top={16}>
        <RowLabel>
          <Cjk>填充</Cjk>
        </RowLabel>
        <RowEnd inset={16}>
          <PlusIcon w={16} stroke={2.2} />
        </RowEnd>
      </Row>
    </Panel>
  );
}

function BindingMenus() {
  return (
    <>
      <FlowMenu>
        <FlowCaption>此项目中的工作流</FlowCaption>
        <FlowItem>
          data_list
          <Icon w={12} h={20} stroke={2.6}>
            <path d="M1.5 1 L10.5 10 L1.5 19" />
          </Icon>
        </FlowItem>
        <FlowFooter>
          更多操作
          <FlowImport>
            <Icon w={22} h={19} stroke={2.2}>
              <path d="M1.2 9.5 L4 2.5 Q4.5 1.2 6 1.2 H16 Q17.5 1.2 18 2.5 L20.8 9.5 V16.5 Q20.8 17.8 19.5 17.8 H2.5 Q1.2 17.8 1.2 16.5 Z" />
              <path d="M1.2 9.5 H6.5 Q7.5 12.5 11 12.5 Q14.5 12.5 15.5 9.5 H20.8 M7.5 5.5 H14.5" />
            </Icon>
            资源库导入
          </FlowImport>
        </FlowFooter>
      </FlowMenu>
      <FieldMenu>
        {arrayOptions.map(({ name, width }) => (
          <FieldOption key={name}>
            <OptionName wide={width}>{name}</OptionName>
            <TypeTag>{'Array<Object>'}</TypeTag>
          </FieldOption>
        ))}
      </FieldMenu>
    </>
  );
}

export default function App(): JSX.Element {
  return (
    <Page>
      <GlobalStyle />
      <TopBar />
      <Body>
        <StructurePanel />
        <DesignCanvas />
        <PropertiesPanel />
      </Body>
      <BottomBar />
      <BindingMenus />
      <Mascot>
        <svg width="61" height="62" viewBox="0 0 61 62">
          <defs>
            <linearGradient id="mascot-fill" x1="0" y1="0" x2="1" y2="0.6">
              <stop offset="0" stopColor="#ffac95" />
              <stop offset="0.55" stopColor="#fb7a6b" />
              <stop offset="1" stopColor="#c8403f" />
            </linearGradient>
          </defs>
          <ellipse cx="30.5" cy="33" rx="30.5" ry="33" fill="url(#mascot-fill)" />
          <ellipse cx="11" cy="23" rx="2" ry="4" fill="#26181a" transform="rotate(10 11 23)" />
          <ellipse cx="27" cy="23" rx="2.3" ry="4" fill="#26181a" transform="rotate(10 27 23)" />
        </svg>
      </Mascot>
      {marks.map((mark) => (
        <MarkBox key={`${mark.x}-${mark.y}`} {...mark} />
      ))}
      {dots.map((dot, index) => (
        <MarkDot key={dot.x} {...dot}>
          {index + 1}
        </MarkDot>
      ))}
    </Page>
  );
}
